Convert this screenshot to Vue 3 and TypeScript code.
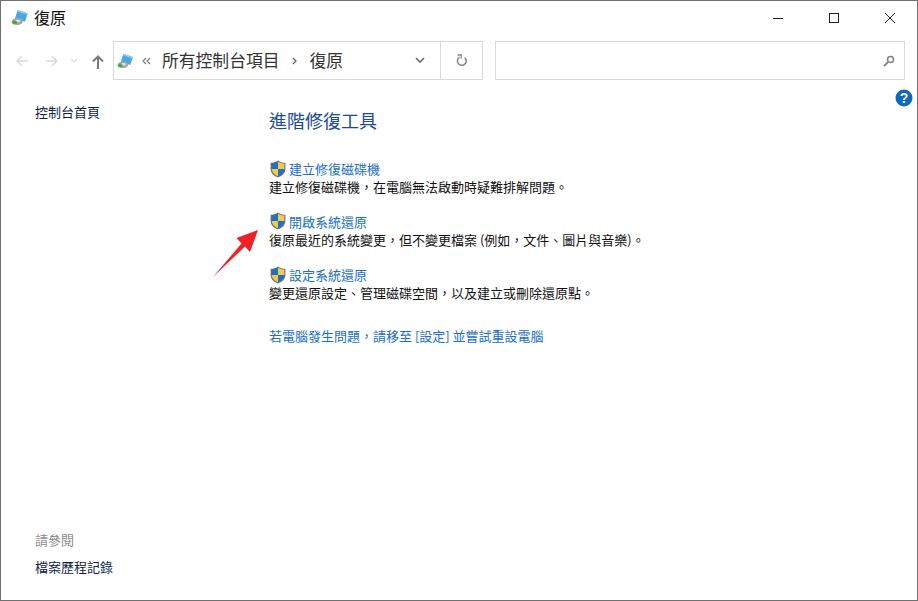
<script setup lang="ts">
interface Item { title: string; desc: string }
const comma = '\uFF0C'
const items: Item[] = [
  { title: '建立修復磁碟機', desc: `建立修復磁碟機${comma}在電腦無法啟動時疑難排解問題。` },
  { title: '開啟系統還原', desc: `復原最近的系統變更${comma}但不變更檔案 (例如${comma}文件、圖片與音樂)。` },
  { title: '設定系統還原', desc: `變更還原設定、管理磁碟空間${comma}以及建立或刪除還原點。` },
]
const settingsText = `若電腦發生問題${comma}請移至 [設定] 並嘗試重設電腦`
</script>

<template>
  <div class="window">
    <header class="titlebar">
      <svg class="appicon" width="20" height="20" viewBox="0 0 20 20">
        <path d="M6.700 3 L16.700 6.300 L14 14.700 L4 11.300 Z" fill="#4aa6e8" />
        <path d="M6.700 3 L16.700 6.300 L16.200 7.800 L6.200 4.500 Z" fill="#8ccdf5" />
        <ellipse cx="6.300" cy="14.500" rx="5.500" ry="3.500" fill="#a3a8a8" />
        <ellipse cx="6.800" cy="14" rx="2.200" ry="1.300" fill="#e2e4e4" />
        <path d="M0.500 15.500 L3.500 13 L3.500 14.300 L6 14.300 L6 16.700 L3.500 16.700 L3.500 18 Z" fill="#3fa83f" />
      </svg>
      <span class="title">復原</span>
      <div class="winbtns">
        <svg width="12" height="12" viewBox="0 0 12 12"><path d="M1 6.500H11" stroke="#222" fill="none" /></svg>
        <svg width="12" height="12" viewBox="0 0 12 12"><rect x="1.500" y="1.500" width="9" height="9" stroke="#222" fill="none" /></svg>
        <svg width="12" height="12" viewBox="0 0 12 12"><path d="M1 1L11 11M11 1L1 11" stroke="#222" fill="none" /></svg>
      </div>
    </header>

    <div class="toolbar">
      <div class="nav">
        <svg width="14" height="14" viewBox="0 0 14 14"><path d="M13 7H2M7 2L2 7L7 12" stroke="#dcdcdc" stroke-width="1.600" fill="none" /></svg>
        <svg class="fwd" width="14" height="14" viewBox="0 0 14 14"><path d="M1 7H12M7 2L12 7L7 12" stroke="#dcdcdc" stroke-width="1.600" fill="none" /></svg>
        <svg class="drop" width="8" height="6" viewBox="0 0 8 6"><path d="M1 1L4 4L7 1" stroke="#dcdcdc" stroke-width="1.200" fill="none" /></svg>
        <svg class="up" width="14" height="16" viewBox="0 0 14 16"><path d="M7 15V3M2 7.500L7 2.500L12 7.500" stroke="#7a7a7a" stroke-width="2" fill="none" /></svg>
      </div>
      <div class="address">
        <svg class="appicon" width="19" height="19" viewBox="0 0 20 20">
          <path d="M6.700 3 L16.700 6.300 L14 14.700 L4 11.300 Z" fill="#4aa6e8" />
          <path d="M6.700 3 L16.700 6.300 L16.200 7.800 L6.200 4.500 Z" fill="#8ccdf5" />
          <ellipse cx="6.300" cy="14.500" rx="5.500" ry="3.500" fill="#a3a8a8" />
          <ellipse cx="6.800" cy="14" rx="2.200" ry="1.300" fill="#e2e4e4" />
          <path d="M0.500 15.500 L3.500 13 L3.500 14.300 L6 14.300 L6 16.700 L3.500 16.700 L3.500 18 Z" fill="#3fa83f" />
        </svg>
        <svg class="chev" width="9" height="8" viewBox="0 0 9 8"><path d="M4 1L1 4L4 7M8 1L5 4L8 7" stroke="#777" stroke-width="1.200" fill="none" /></svg>
        <span class="crumb">所有控制台項目</span>
        <svg class="sep" width="5" height="8" viewBox="0 0 5 8"><path d="M1 1L4 4L1 7" stroke="#666" stroke-width="1.300" fill="none" /></svg>
        <span class="crumb">復原</span>
        <span class="grow"></span>
        <svg class="addr-drop" width="10" height="7" viewBox="0 0 10 7"><path d="M1 1L5 5L9 1" stroke="#6d6d6d" stroke-width="1.600" fill="none" /></svg>
        <div class="refresh">
          <svg width="12" height="13" viewBox="0 0 12 13">
            <path d="M3.500 3.200A4.400 4.400 0 1 0 8.700 3.600" stroke="#848484" stroke-width="1.500" fill="none" />
            <path d="M1.600 1H5.200V4.600" stroke="#848484" stroke-width="1.300" fill="none" />
          </svg>
        </div>
      </div>
      <div class="search">
        <svg width="12" height="12" viewBox="0 0 12 12">
          <circle cx="7.500" cy="4.500" r="3" stroke="#808080" stroke-width="1.500" fill="none" />
          <path d="M5.200 6.800L1 11" stroke="#808080" stroke-width="1.800" fill="none" />
        </svg>
      </div>
    </div>

    <div class="help-row">
      <svg width="18" height="18" viewBox="0 0 18 18">
        <circle cx="9" cy="9" r="8.500" fill="#0d68c0" />
        <text x="9" y="14" text-anchor="middle" class="help-q">?</text>
      </svg>
    </div>

    <div class="body">
      <aside class="side">
        <a class="side-link">控制台首頁</a>
        <div class="grow"></div>
        <div class="see">請參閱</div>
        <a class="side-link">檔案歷程記錄</a>
      </aside>
      <main class="main">
        <h1>進階修復工具</h1>
        <section v-for="item in items" :key="item.title" class="entry">
          <div class="entry-title">
            <svg class="shield" width="16" height="18" viewBox="1.500 0.500 15 17">
              <path d="M9 1C11 2.600 13.500 3.200 16 3.200V9C16 12.800 13 15.600 9 17C5 15.600 2 12.800 2 9V3.200C4.500 3.200 7 2.600 9 1Z" fill="#6c7178" />
              <path d="M9 2.200V9H3V3.900C5 3.800 7.300 3.300 9 2.200Z" fill="#1c72c4" />
              <path d="M9 2.200C10.700 3.300 13 3.800 15 3.900V9H9Z" fill="#f7c84a" />
              <path d="M3 9H9V15.800C5.600 14.500 3.200 12.200 3 9Z" fill="#f7c84a" />
              <path d="M9 9H15C14.800 12.200 12.400 14.500 9 15.800Z" fill="#1c72c4" />
            </svg>
            <a class="link">{{ item.title }}</a>
          </div>
          <p>{{ item.desc }}</p>
        </section>
        <a class="link settings">{{ settingsText }}</a>
      </main>
    </div>

    <svg class="arrow" width="50" height="54" viewBox="0 0 50 54">
      <path d="M1 48L29.500 14.500L24.500 9L46 1L38 23L33 17.500Z" fill="#ee2129" />
    </svg>
  </div>
</template>

<style>
html, body { margin: 0; background: #fff; }
</style>

<style scoped>
.window {
  position: relative;
  box-sizing: border-box;
  width: 918px;
  height: 601px;
  border: 1px solid #6f6f6f;
  background: #fff;
  display: flex;
  flex-direction: column;
  overflow: hidden;
  font-family: "Noto Sans CJK TC", "Noto Sans", sans-serif;
  color: #111;
}
.titlebar {
  height: 32px;
  display: flex;
  align-items: center;
  padding: 0 10px;
  flex: none;
}
.appicon { flex: none; }
.title { font-size: 16px; margin-left: 3px; line-height: 32px; }
.winbtns {
  margin-left: auto;
  display: flex;
  gap: 44px;
  margin-right: 11px;
  align-items: center;
  padding-top: 2px;
}
.toolbar {
  height: 39px;
  margin-top: 8px;
  display: flex;
  align-items: stretch;
  flex: none;
}
.nav {
  width: 112px;
  flex: none;
  position: relative;
  display: flex;
  align-items: center;
  padding-left: 14px;
  box-sizing: border-box;
}
.fwd { margin-left: 16px; }
.drop { margin-left: 11px; }
.up { margin-left: 13px; margin-top: 3px; }
.address {
  width: 370px;
  box-sizing: border-box;
  border: 1px solid #d9d9d9;
  display: flex;
  align-items: center;
  padding-left: 3px;
  color: #333;
}
.chev { margin-left: 6px; margin-right: 11px; }
.crumb { font-size: 16.800px; line-height: 1; }
.sep { margin: 0 12px 0 13px; }
.grow { flex: 1; }
.addr-drop { margin-right: 15px; }
.refresh {
  width: 41px;
  height: 100%;
  border-left: 1px solid #d9d9d9;
  display: flex;
  align-items: center;
  justify-content: center;
}
.search {
  width: 410px;
  box-sizing: border-box;
  margin-left: 12px;
  border: 1px solid #d9d9d9;
  display: flex;
  align-items: center;
  justify-content: flex-end;
  padding-right: 9px;
}
.help-row {
  height: 18px;
  margin-top: 9px;
  margin-bottom: -4px;
  display: flex;
  justify-content: flex-end;
  padding-right: 4px;
  flex: none;
}
.help-q { font-size: 14px; font-weight: 700; fill: #fff; font-family: "Liberation Sans", sans-serif; }
.body { flex: 1; display: flex; min-height: 0; }
.side {
  width: 268px;
  flex: none;
  box-sizing: border-box;
  padding: 0 0 24px 34px;
  display: flex;
  flex-direction: column;
  font-size: 13px;
}
.side-link { color: #0e1f47; line-height: 18px; }
.see { color: #8c8c8c; line-height: 18px; margin-bottom: 9px; }
.main { flex: 1; }
h1 {
  margin: 4px 0 0;
  font-size: 18px;
  font-weight: 400;
  line-height: 27px;
  color: #1a4a9c;
}
.entry:first-of-type { margin-top: 25px; }
.entry + .entry { margin-top: 15.500px; }
.entry:last-of-type { margin-top: 16.500px; }
.entry-title { display: flex; align-items: center; height: 19px; gap: 3px; padding-left: 1px; }
.shield { flex: none; }
.link { color: #1a6fc9; font-size: 13px; line-height: 19px; }
p { margin: 0; font-size: 13px; line-height: 18px; color: #111; }
.settings { display: block; margin-top: 24px; }
.arrow { position: absolute; left: 211px; top: 228px; }
</style>
